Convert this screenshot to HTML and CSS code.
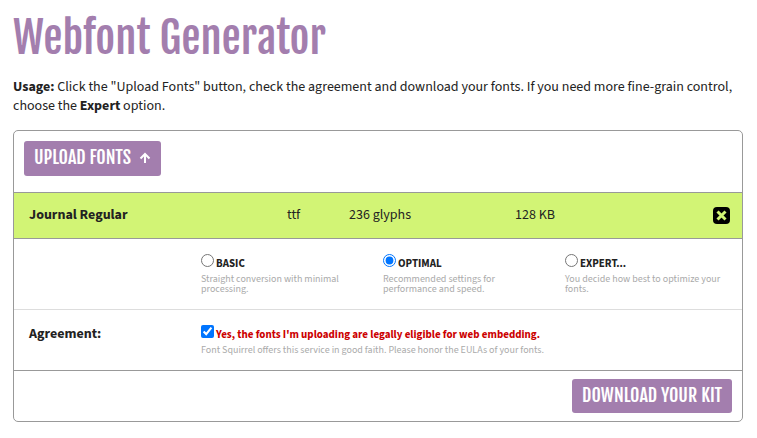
FILE: index.html
```html
<!DOCTYPE html>
<html lang="en"><head><meta charset="utf-8"><title>Webfont Generator</title><link rel="stylesheet" href="styles.css"></head>
<body>
<main>
<h1>Webfont Generator</h1>
<p class="usage"><strong>Usage:</strong> Click the "Upload Fonts" button, check the agreement and download your fonts. If you need more fine-grain control, choose the <strong>Expert</strong> option.</p>
<form class="panel">
<div class="upload"><button type="button" class="btn">UPLOAD FONTS <svg class="arrow" viewBox="0 0 12 12" aria-hidden="true"><path d="M6 12V2.5M1.5 7.5 6 3 10.5 7.5"/></svg></button></div>
<div class="font-row"><strong>Journal Regular</strong><span>ttf</span><span>236 glyphs</span><span>128 KB</span><button type="button" class="remove" aria-label="Remove"><svg viewBox="0 0 17 17" aria-hidden="true"><rect width="17" height="17" rx="4"/><path d="M4.5 4.5l8 8M12.5 4.5l-8 8"/></svg></button></div>
<div class="options">
<div class="option"><label><input type="radio" name="mode">BASIC</label><p>Straight conversion with minimal processing.</p></div>
<div class="option"><label><input type="radio" name="mode" checked>OPTIMAL</label><p>Recommended settings for performance and speed.</p></div>
<div class="option"><label><input type="radio" name="mode">EXPERT...</label><p>You decide how best to optimize your fonts.</p></div>
</div>
<div class="agreement"><strong>Agreement:</strong><div class="option"><label class="legal"><input type="checkbox" checked>Yes, the fonts I'm uploading are legally eligible for web embedding.</label><p>Font Squirrel offers this service in good faith. Please honor the EULAs of your fonts.</p></div></div>
<div class="download"><button type="button" class="btn">DOWNLOAD YOUR KIT</button></div>
</form>
</main>
</body></html>
```
FILE: styles.css
```css
* { box-sizing: border-box; }
body { margin: 0; color: #222; background: #fff; font: 14px/19px "Source Sans Pro", "Source Sans 3", "Noto Sans CJK SC", sans-serif; }
main { padding: 10px 14px 16px 13px; }
h1 { margin: 0; color: #a37eae; font: 400 43px/56px "Fjalla One", "Liberation Sans Narrow", "Roboto Condensed", sans-serif; }
p { margin: 0; }
.usage { margin: 12px 0 14px; }
.panel { border: 1px solid #999; border-radius: 5px; overflow: hidden; }
.upload { padding: 10px; height: 61px; }
.btn { display: inline-flex; align-items: center; gap: 8px; padding: 0 10px 2px; border: 0; border-radius: 3px; background: #a37eae; color: #fff; font: 400 18px/32px "Fjalla One", "Liberation Sans Narrow", "Roboto Condensed", sans-serif; }
.arrow { width: 12px; height: 12px; fill: none; stroke: #fff; stroke-width: 2; }
.upload .btn { padding-bottom: 3px; }
.font-row { display: grid; grid-template-columns: 258px 62px 166px 1fr 17px; align-items: center; height: 47px; padding: 0 12px 0 15px; background: #d2f475; border: solid #999; border-width: 1px 0; }
.remove { width: 17px; height: 17px; padding: 0; border: 0; background: none; }
.remove svg { display: block; width: 17px; height: 17px; }
.remove path { stroke: #d2f475; stroke-width: 3; }
.options { display: grid; grid-template-columns: repeat(3, 182px); padding: 14px 0 15px 187px; border-bottom: 1px solid #ddd; }
.option label { display: flex; align-items: center; height: 21px; font-weight: 700; font-size: 11px; }
.option input { width: 13px; height: 13px; margin: 0 2px 6px 0; }
.option p { color: #aaa; font-size: 10px; line-height: 10px; padding-right: 20px; }
.agreement { display: grid; grid-template-columns: 172px 1fr; padding: 14px 15px 15px; line-height: 21px; }
.option .legal { color: #c00; }
.download { display: flex; justify-content: flex-end; padding: 8px 10px; border-top: 1px solid #999; }
```
